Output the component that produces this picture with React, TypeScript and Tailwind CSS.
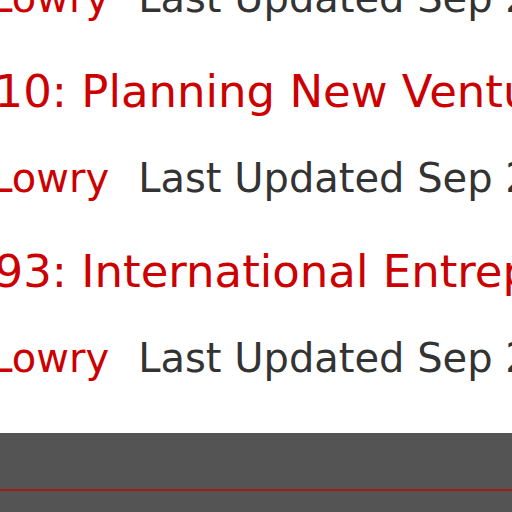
import React from 'react';

interface Course {
    title: string;
    author: string;
    updated: string;
}

const COURSES: Course[] = [
    { title: 'ENT 301: Entrepreneurial Mindset', author: 'Karen Lowry', updated: 'Sep 21, 2016' },
    { title: 'ENT 310: Planning New Ventures', author: 'Karen Lowry', updated: 'Sep 21, 2016' },
    { title: 'ENT 393: International Entrepreneurship', author: 'Karen Lowry', updated: 'Sep 21, 2016' },
];

const App: React.FC = () => {
    return (
        <div className="w-[512px] h-[512px] overflow-hidden bg-white font-['DejaVu_Sans','Verdana',sans-serif]">
            <div className="-mt-[118px]">
                <ul className="-ml-[138px] whitespace-nowrap">
                    {COURSES.map(course => (
                        <li key={course.title} className="h-[180px]">
                            <a className="block text-[45px] leading-[60px] text-[#cc0000]">{course.title}</a>
                            <div className="mt-[26px] flex gap-[29px] text-[40px] leading-[60px]">
                                <span className="text-[#cc0000]">{course.author}</span>
                                <span className="text-[#333333]">Last Updated {course.updated}</span>
                            </div>
                        </li>
                    ))}
                </ul>
                <footer className="mt-[11px] h-[200px] bg-[#545454] pt-[56px]">
                    <div className="h-[2px] bg-[#a31a1a]" />
                </footer>
            </div>
        </div>
    );
};

export default App;
